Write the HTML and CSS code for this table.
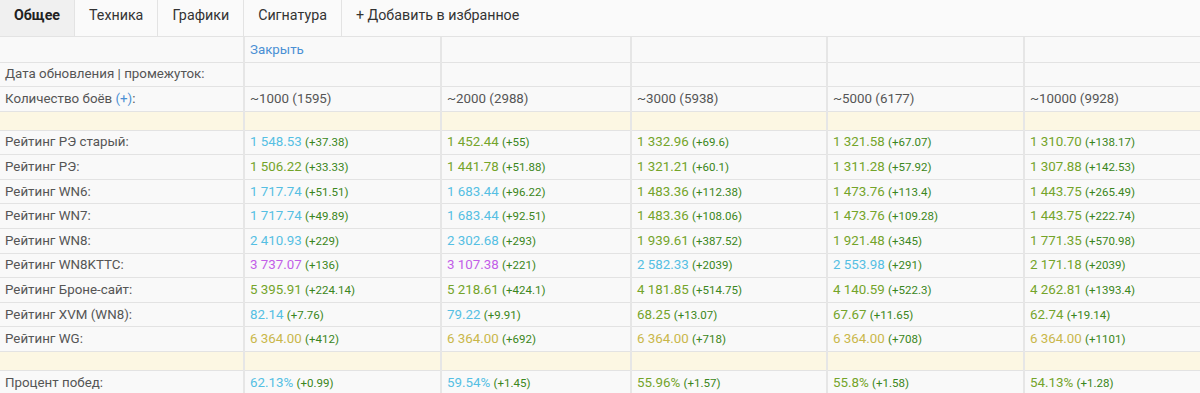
FILE: index.html
```html
<!DOCTYPE html>
<html lang="ru">
<head>
<meta charset="utf-8">
<title>Статистика</title>
<link rel="stylesheet" href="styles.css">
</head>
<body>
<nav class="tabs">
  <a class="tab active">Общее</a>
  <a class="tab">Техника</a>
  <a class="tab">Графики</a>
  <a class="tab">Сигнатура</a>
  <a class="tab plain">+ Добавить в избранное</a>
</nav>
<table class="stats">
  <colgroup>
    <col class="c0"><col class="c1"><col class="c2"><col class="c3"><col class="c4"><col class="c5">
  </colgroup>
  <tr class="head"><td></td><td><a class="link">Закрыть</a></td><td></td><td></td><td></td><td></td></tr>
  <tr><td class="lbl">Дата обновления | промежуток:</td><td></td><td></td><td></td><td></td><td></td></tr>
  <tr><td class="lbl">Количество боёв <a class="link">(+)</a>:</td><td>~1000 (1595)</td><td>~2000 (2988)</td><td>~3000 (5938)</td><td>~5000 (6177)</td><td>~10000 (9928)</td></tr>
  <tr class="sep"><td></td><td></td><td></td><td></td><td></td><td></td></tr>
  <tr><td class="lbl">Рейтинг РЭ старый:</td>
    <td><span class="v b">1 548.53</span> <span class="d">(+37.38)</span></td>
    <td><span class="v g">1 452.44</span> <span class="d">(+55)</span></td>
    <td><span class="v g">1 332.96</span> <span class="d">(+69.6)</span></td>
    <td><span class="v g">1 321.58</span> <span class="d">(+67.07)</span></td>
    <td><span class="v g">1 310.70</span> <span class="d">(+138.17)</span></td></tr>
  <tr><td class="lbl">Рейтинг РЭ:</td>
    <td><span class="v g">1 506.22</span> <span class="d">(+33.33)</span></td>
    <td><span class="v g">1 441.78</span> <span class="d">(+51.88)</span></td>
    <td><span class="v g">1 321.21</span> <span class="d">(+60.1)</span></td>
    <td><span class="v g">1 311.28</span> <span class="d">(+57.92)</span></td>
    <td><span class="v g">1 307.88</span> <span class="d">(+142.53)</span></td></tr>
  <tr><td class="lbl">Рейтинг WN6:</td>
    <td><span class="v b">1 717.74</span> <span class="d">(+51.51)</span></td>
    <td><span class="v b">1 683.44</span> <span class="d">(+96.22)</span></td>
    <td><span class="v g">1 483.36</span> <span class="d">(+112.38)</span></td>
    <td><span class="v g">1 473.76</span> <span class="d">(+113.4)</span></td>
    <td><span class="v g">1 443.75</span> <span class="d">(+265.49)</span></td></tr>
  <tr><td class="lbl">Рейтинг WN7:</td>
    <td><span class="v b">1 717.74</span> <span class="d">(+49.89)</span></td>
    <td><span class="v b">1 683.44</span> <span class="d">(+92.51)</span></td>
    <td><span class="v g">1 483.36</span> <span class="d">(+108.06)</span></td>
    <td><span class="v g">1 473.76</span> <span class="d">(+109.28)</span></td>
    <td><span class="v g">1 443.75</span> <span class="d">(+222.74)</span></td></tr>
  <tr><td class="lbl">Рейтинг WN8:</td>
    <td><span class="v b">2 410.93</span> <span class="d">(+229)</span></td>
    <td><span class="v b">2 302.68</span> <span class="d">(+293)</span></td>
    <td><span class="v g">1 939.61</span> <span class="d">(+387.52)</span></td>
    <td><span class="v g">1 921.48</span> <span class="d">(+345)</span></td>
    <td><span class="v g">1 771.35</span> <span class="d">(+570.98)</span></td></tr>
  <tr><td class="lbl">Рейтинг WN8KTTC:</td>
    <td><span class="v p">3 737.07</span> <span class="d">(+136)</span></td>
    <td><span class="v p">3 107.38</span> <span class="d">(+221)</span></td>
    <td><span class="v b">2 582.33</span> <span class="d">(+2039)</span></td>
    <td><span class="v b">2 553.98</span> <span class="d">(+291)</span></td>
    <td><span class="v g">2 171.18</span> <span class="d">(+2039)</span></td></tr>
  <tr><td class="lbl">Рейтинг Броне-сайт:</td>
    <td><span class="v g">5 395.91</span> <span class="d">(+224.14)</span></td>
    <td><span class="v g">5 218.61</span> <span class="d">(+424.1)</span></td>
    <td><span class="v g">4 181.85</span> <span class="d">(+514.75)</span></td>
    <td><span class="v g">4 140.59</span> <span class="d">(+522.3)</span></td>
    <td><span class="v g">4 262.81</span> <span class="d">(+1393.4)</span></td></tr>
  <tr><td class="lbl">Рейтинг XVM (WN8):</td>
    <td><span class="v b">82.14</span> <span class="d">(+7.76)</span></td>
    <td><span class="v b">79.22</span> <span class="d">(+9.91)</span></td>
    <td><span class="v g">68.25</span> <span class="d">(+13.07)</span></td>
    <td><span class="v g">67.67</span> <span class="d">(+11.65)</span></td>
    <td><span class="v g">62.74</span> <span class="d">(+19.14)</span></td></tr>
  <tr><td class="lbl">Рейтинг WG:</td>
    <td><span class="v y">6 364.00</span> <span class="d">(+412)</span></td>
    <td><span class="v y">6 364.00</span> <span class="d">(+692)</span></td>
    <td><span class="v y">6 364.00</span> <span class="d">(+718)</span></td>
    <td><span class="v y">6 364.00</span> <span class="d">(+708)</span></td>
    <td><span class="v y">6 364.00</span> <span class="d">(+1101)</span></td></tr>
  <tr class="sep"><td></td><td></td><td></td><td></td><td></td><td></td></tr>
  <tr><td class="lbl">Процент побед:</td>
    <td><span class="v b">62.13%</span> <span class="d">(+0.99)</span></td>
    <td><span class="v b">59.54%</span> <span class="d">(+1.45)</span></td>
    <td><span class="v g">55.96%</span> <span class="d">(+1.57)</span></td>
    <td><span class="v g">55.8%</span> <span class="d">(+1.58)</span></td>
    <td><span class="v g">54.13%</span> <span class="d">(+1.28)</span></td></tr>
</table>
</body>
</html>
```
FILE: styles.css
```css
html, body {
  margin: 0;
  padding: 0;
  background: #fafafa;
  font-family: Roboto, "Liberation Sans", Arial, sans-serif;
  color: #555;
}

.tabs {
  display: flex;
  height: 36px;
  border-bottom: 1px solid #e3e3e3;
  background: #fafafa;
}

.tab {
  display: flex;
  align-items: flex-start;
  padding: 7px 14px 0;
  box-sizing: border-box;
  font-size: 14.25px;
  line-height: 17px;
  color: #333;
  border-right: 1px solid #e3e3e3;
  cursor: pointer;
}

.tab.active {
  background: #f0f0f0;
  font-weight: 700;
  color: #222;
}

.tab.plain {
  border-right: none;
}

.stats {
  border-collapse: collapse;
  table-layout: fixed;
  width: 1200px;
  font-size: 13.33px;
  background: #f9f9f9;
}

.c0 { width: 244px; }
.c1 { width: 197px; }
.c2 { width: 190px; }
.c3 { width: 196px; }
.c4 { width: 197px; }
.c5 { width: 176px; }

.stats td {
  height: 24.6px;
  padding: 0 5px;
  box-sizing: border-box;
  line-height: 16px;
  border-top: 1px solid #e3e3e3;
  border-bottom: 1px solid #e3e3e3;
  border-left: 2px solid #e6e6e6;
  white-space: nowrap;
  color: #555;
}

.stats td:first-child {
  border-left: none;
  padding-left: 5px;
}

.stats tr.head td {
  height: 25px;
  padding-top: 1px;
  border-top: none;
}

.stats tr.sep td {
  height: 19px;
  background: #fcf7e3;
}

.link {
  color: #4a90d4;
  cursor: pointer;
}

.v { font-size: 13.33px; }
.v.b { color: #55bfe3; }
.v.g { color: #74a42a; }
.v.p { color: #c25ee8; }
.v.y { color: #c9b74a; }

.d {
  font-size: 11.5px;
  color: #3a8620;
}
```
